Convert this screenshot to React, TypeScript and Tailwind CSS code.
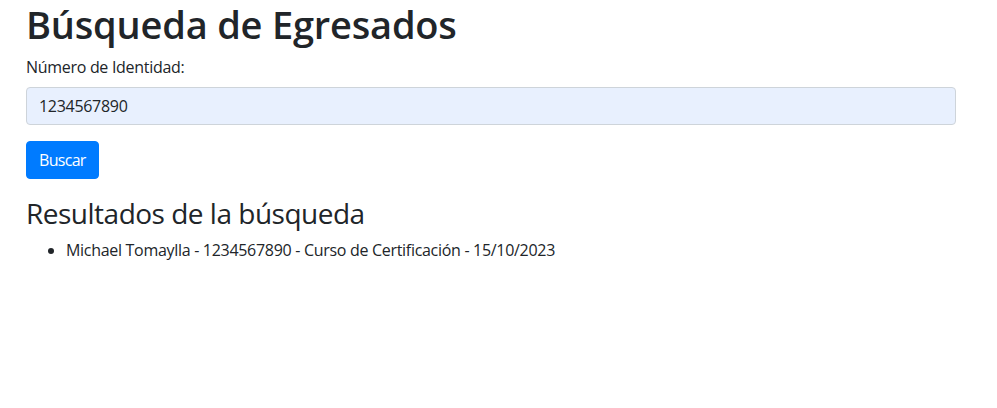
export default function App() {
  return (
    <div className="min-h-screen bg-white text-[#212529] font-['Open_Sans',sans-serif] text-[16px] leading-[24px] tracking-[-0.3px]">
      <div className="ml-[26px] w-[930px]">
        <h1 className="pt-px text-[38px] leading-[46px] font-semibold tracking-[-0.2px] mb-2">Búsqueda de Egresados</h1>
        <div className="mb-4">
          <label className="block mb-2">Número de Identidad:</label>
          <input
            type="text"
            defaultValue="1234567890"
            className="block w-full h-[38px] px-3 py-1.5 bg-[#e8f0fe] border border-[#ced4da] rounded text-[#212529] outline-none tracking-[-0.3px]"
          />
        </div>
        <button className="h-[38px] px-3 bg-[#007bff] text-white rounded border border-[#007bff] tracking-[-0.7px]">Buscar</button>
        <h3 className="mt-[17px] text-[28px] leading-[34px] font-medium tracking-[-0.5px] mb-2">Resultados de la búsqueda</h3>
        <ul className="list-disc pl-10">
          <li>Michael Tomaylla - 1234567890 - Curso de Certificación - 15/10/2023</li>
        </ul>
      </div>
    </div>
  );
}
